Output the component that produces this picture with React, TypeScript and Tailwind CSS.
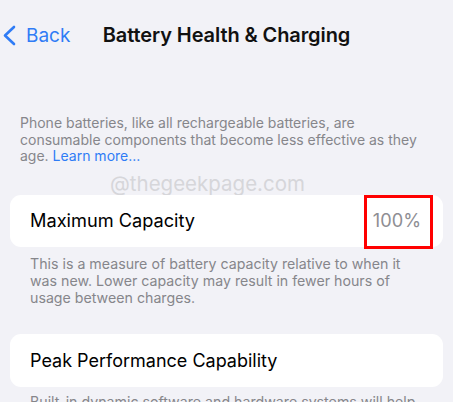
import React from "react";

const font = { fontFamily: "Inter, 'Liberation Sans', sans-serif" };

function Chevron() {
  return (
    <svg width="14" height="21" viewBox="0 0 14 21" fill="none">
      <path
        d="M12 2 L3 10.5 L12 19"
        stroke="#2f7cf6"
        strokeWidth="2.6"
        strokeLinecap="round"
        strokeLinejoin="round"
      />
    </svg>
  );
}

export default function App() {
  return (
    <div
      className="relative h-[402px] w-[453px] overflow-hidden bg-[#f2f2f7] antialiased"
      style={font}
    >
      {/* Nav bar */}
      <div className="relative flex h-[70px] items-center justify-center">
        <div className="absolute left-[2px] top-[25px] flex items-center gap-[10px]">
          <Chevron />
          <span className="text-[19px] leading-none text-[#2f7cf6]">Back</span>
        </div>
        <h1 className="text-[20px] font-semibold tracking-[-0.1px] text-[#111]">
          Battery Health &amp; Charging
        </h1>
      </div>

      {/* Intro */}
      <p className="mt-[45px] px-[20px] text-[14px] leading-[16.5px] text-[#86868b]">
        Phone batteries, like all rechargeable batteries, are consumable
        components that become less effective as they age.{" "}
        <span className="text-[#2f7cf6]">Learn more...</span>
      </p>

      {/* Watermark */}
      <div className="absolute left-[110px] top-[171px] text-[20.5px] leading-[26px] text-[#d6d6da]">
        @thegeekpage.com
      </div>

      {/* Maximum capacity */}
      <div className="relative mx-[10px] mt-[30px] flex h-[52px] items-center justify-between rounded-[11px] bg-white pl-[20px] pr-[22px]">
        <span className="text-[18.2px] text-black">Maximum Capacity</span>
        <span className="text-[18.2px] text-[#8e8e93]">100%</span>
        <div className="absolute right-[10px] top-0 h-[54px] w-[69px] border-[3px] border-[#ff0000]" />
      </div>
      <p className="mt-[8px] px-[30px] pr-[40px] text-[14.2px] leading-[17px] text-[#86868b]">
        This is a measure of battery capacity relative to when it was new.
        Lower capacity may result in fewer hours of usage between charges.
      </p>

      {/* Peak performance */}
      <div className="mx-[10px] mt-[28px] flex h-[53px] items-center rounded-[11px] bg-white pl-[20px]">
        <span className="text-[18px] text-black">Peak Performance Capability</span>
      </div>
      <p className="mt-[6px] px-[30px] text-[14.2px] leading-[17px] text-[#86868b]">
        Built-in dynamic software and hardware systems will help counter
        performance impacts that may be noticed as your iPhone battery ages.
      </p>
    </div>
  );
}
